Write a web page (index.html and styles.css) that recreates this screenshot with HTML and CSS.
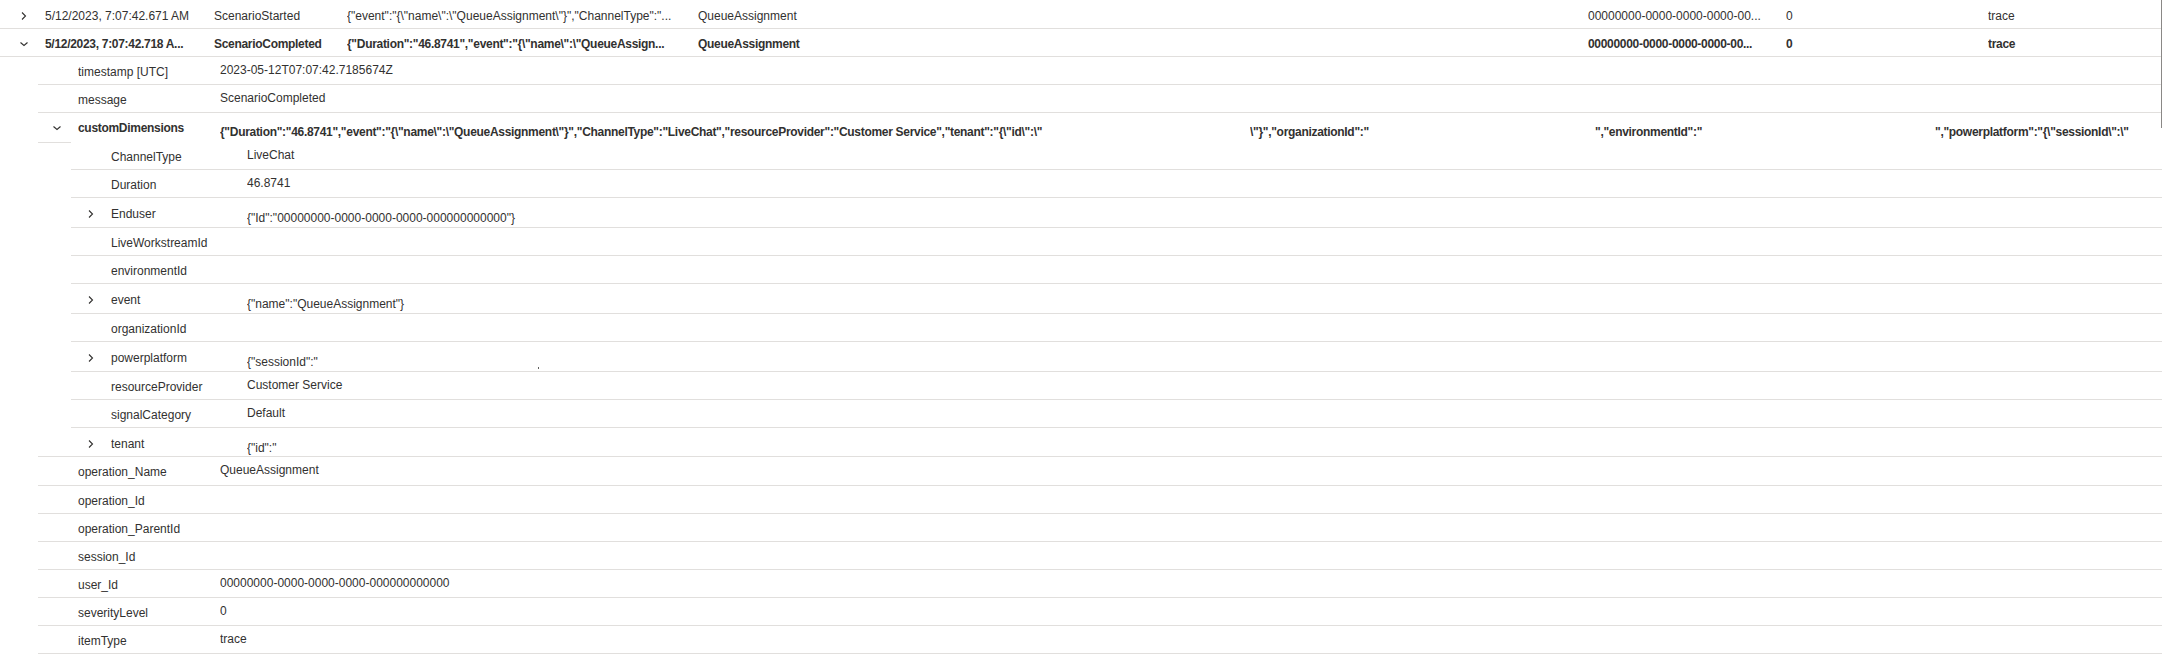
FILE: index.html
```html
<!DOCTYPE html>
<html lang="en">
<head>
<meta charset="utf-8">
<title>Log results</title>
<link rel="stylesheet" href="styles.css">
</head>
<body>
<div class="results">
  <div class="row main first">
    <span class="chev"><svg width="10" height="10" viewBox="0 0 10 10"><polyline points="3,1.5 6.5,5 3,8.5" /></svg></span>
    <span class="cell">5/12/2023, 7:07:42.671 AM</span>
    <span class="cell">ScenarioStarted</span>
    <span class="cell">{"event":"{\"name\":\"QueueAssignment\"}","ChannelType":"...</span>
    <span class="cell">QueueAssignment</span>
    <span class="cell">00000000-0000-0000-0000-00...</span>
    <span class="cell">0</span>
    <span class="cell">trace</span>
  </div>
  <div class="row main open">
    <span class="chev"><svg width="10" height="10" viewBox="0 0 10 10"><polyline points="1.5,3.5 5,6.5 8.5,3.5" /></svg></span>
    <span class="cell">5/12/2023, 7:07:42.718 A...</span>
    <span class="cell">ScenarioCompleted</span>
    <span class="cell">{"Duration":"46.8741","event":"{\"name\":\"QueueAssign...</span>
    <span class="cell">QueueAssignment</span>
    <span class="cell">00000000-0000-0000-0000-00...</span>
    <span class="cell">0</span>
    <span class="cell">trace</span>
  </div>

  <div class="details">
    <div class="row detail"><span class="chev"></span><span class="label">timestamp [UTC]</span><span class="value">2023-05-12T07:07:42.7185674Z</span></div>
    <div class="row detail"><span class="chev"></span><span class="label">message</span><span class="value">ScenarioCompleted</span></div>

    <div class="group">
      <div class="row detail cd">
        <span class="chev"><svg width="10" height="10" viewBox="0 0 10 10"><polyline points="1.5,3.5 5,6.5 8.5,3.5" /></svg></span>
        <span class="label">customDimensions</span>
        <span class="value json">
          <span class="seg seg1">{"Duration":"46.8741","event":"{\"name\":\"QueueAssignment\"}","ChannelType":"LiveChat","resourceProvider":"Customer Service","tenant":"{\"id\":\"</span><span class="seg seg2">\"}","organizationId":"</span><span class="seg seg3">","environmentId":"</span><span class="seg seg4">","powerplatform":"{\"sessionId\":\"</span>
        </span>
      </div>
      <div class="nest-wrap">
        <div class="gutter"></div>
        <div class="nested">
          <div class="row detail"><span class="chev"></span><span class="label">ChannelType</span><span class="value">LiveChat</span></div>
          <div class="row detail"><span class="chev"></span><span class="label">Duration</span><span class="value">46.8741</span></div>
          <div class="row detail expand"><span class="chev"><svg width="10" height="10" viewBox="0 0 10 10"><polyline points="3,1.5 6.5,5 3,8.5" /></svg></span><span class="label">Enduser</span><span class="value">{"Id":"00000000-0000-0000-0000-000000000000"}</span></div>
          <div class="row detail"><span class="chev"></span><span class="label">LiveWorkstreamId</span><span class="value"></span></div>
          <div class="row detail"><span class="chev"></span><span class="label">environmentId</span><span class="value"></span></div>
          <div class="row detail expand"><span class="chev"><svg width="10" height="10" viewBox="0 0 10 10"><polyline points="3,1.5 6.5,5 3,8.5" /></svg></span><span class="label">event</span><span class="value">{"name":"QueueAssignment"}</span></div>
          <div class="row detail"><span class="chev"></span><span class="label">organizationId</span><span class="value"></span></div>
          <div class="row detail expand"><span class="chev"><svg width="10" height="10" viewBox="0 0 10 10"><polyline points="3,1.5 6.5,5 3,8.5" /></svg></span><span class="label">powerplatform</span><span class="value">{"sessionId":"<span class="speck"></span></span></div>
          <div class="row detail"><span class="chev"></span><span class="label">resourceProvider</span><span class="value">Customer Service</span></div>
          <div class="row detail"><span class="chev"></span><span class="label">signalCategory</span><span class="value">Default</span></div>
          <div class="row detail expand"><span class="chev"><svg width="10" height="10" viewBox="0 0 10 10"><polyline points="3,1.5 6.5,5 3,8.5" /></svg></span><span class="label">tenant</span><span class="value">{"id":"</span></div>
        </div>
      </div>
    </div>

    <div class="row detail tall"><span class="chev"></span><span class="label">operation_Name</span><span class="value">QueueAssignment</span></div>
    <div class="row detail"><span class="chev"></span><span class="label">operation_Id</span><span class="value"></span></div>
    <div class="row detail"><span class="chev"></span><span class="label">operation_ParentId</span><span class="value"></span></div>
    <div class="row detail"><span class="chev"></span><span class="label">session_Id</span><span class="value"></span></div>
    <div class="row detail"><span class="chev"></span><span class="label">user_Id</span><span class="value">00000000-0000-0000-0000-000000000000</span></div>
    <div class="row detail"><span class="chev"></span><span class="label">severityLevel</span><span class="value">0</span></div>
    <div class="row detail"><span class="chev"></span><span class="label">itemType</span><span class="value">trace</span></div>
  </div>
</div>
<div class="scroll-edge"></div>
</body>
</html>
```

FILE: styles.css
```css
* { box-sizing: border-box; }

html, body {
  margin: 0;
  padding: 0;
  background: #ffffff;
}

body {
  position: relative;
  width: 2162px;
  height: 656px;
  overflow: hidden;
  font-family: "Liberation Sans", Arial, sans-serif;
  font-size: 12px;
  line-height: 16px;
  color: #323130;
}

.row {
  display: grid;
  height: 28px;
  border-bottom: 1px solid #e1dfdd;
  white-space: nowrap;
}

.cell, .label, .value {
  overflow: hidden;
  white-space: nowrap;
}

.chev {
  display: flex;
  align-items: center;
  height: 16px;
}

.chev svg polyline {
  fill: none;
  stroke: #323130;
  stroke-width: 1.1;
}

/* main result rows */
.main {
  grid-template-columns: 45px 169px 133px 351px 890px 198px 202px 1fr;
  padding-top: 7px;
}
.main .chev { padding-left: 19px; }
.main.first { height: 29px; padding-top: 8px; }
.main.open { font-weight: bold; letter-spacing: -0.3px; }

/* expanded detail */
.details { margin-left: 38px; }

.detail {
  grid-template-columns: 40px 142px 1fr;
  align-items: start;
}
.detail .chev { padding-left: 14px; padding-top: 7px; height: 23px; }
.detail .label { padding-top: 7px; }
.detail .value { padding-top: 5px; }

.detail.expand { height: 30px; }
.detail.expand .chev { padding-top: 8px; height: 24px; }
.detail.expand .label { padding-top: 8px; }
.detail.expand .value { padding-top: 12px; }

.detail.tall { height: 29px; }

/* customDimensions group */
.group { border-bottom: 1px solid #e1dfdd; }

.detail.cd {
  height: 29px;
  border-bottom: none;
  font-weight: bold;
  letter-spacing: -0.3px;
}
.detail.cd .chev { padding-top: 7px; }
.detail.cd .label { padding-top: 7px; }
.detail.cd .value { padding-top: 11px; overflow: visible; }

.json { display: flex; }
.seg { display: block; overflow: hidden; flex: none; }
.seg1 { width: 836px; margin-right: 194px; }
.seg2 { width: 135px; margin-right: 210px; }
.seg3 { width: 109px; margin-right: 231px; }
.seg4 { width: 260px; }

.nest-wrap { display: flex; }
.gutter { width: 33px; flex: none; border-top: 1px solid #e1dfdd; }
.nested { flex: 1; }
.nested .detail { grid-template-columns: 40px 136px 1fr; }
.nested .detail .chev { padding-left: 15px; }
.nested .detail:last-child { border-bottom: none; height: 28px; }

.speck {
  display: inline-block;
  width: 1px;
  height: 2px;
  margin-left: 220px;
  background: #605e5c;
  vertical-align: -3px;
}

.scroll-edge {
  position: absolute;
  top: 0;
  right: 0;
  width: 1px;
  height: 128px;
  background: #8a8886;
}
```
